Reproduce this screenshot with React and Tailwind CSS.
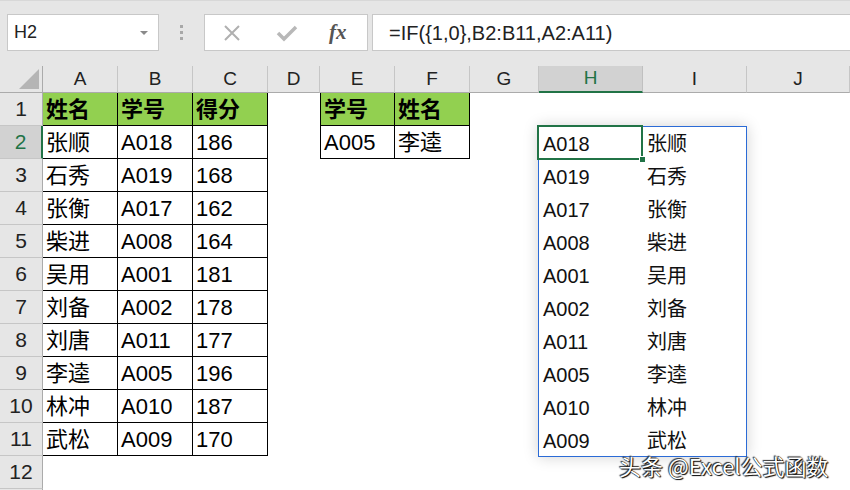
import React from 'react';

const cols = ['A', 'B', 'C', 'D', 'E', 'F', 'G', 'H', 'I', 'J'];

const names = ['张顺', '石秀', '张衡', '柴进', '吴用', '刘备', '刘唐', '李逵', '林冲', '武松'];
const ids = ['A018', 'A019', 'A017', 'A008', 'A001', 'A002', 'A011', 'A005', 'A010', 'A009'];
const scores = ['186', '168', '162', '164', '181', '178', '177', '196', '187', '170'];

function cellContent(col, row) {
  if (row === 1) {
    if (col === 'A') return '姓名';
    if (col === 'B') return '学号';
    if (col === 'C') return '得分';
    if (col === 'E') return '学号';
    if (col === 'F') return '姓名';
    return '';
  }
  const i = row - 2;
  if (row === 2 && col === 'E') return 'A005';
  if (row === 2 && col === 'F') return '李逵';
  if (i >= 0 && i < 10) {
    if (col === 'A') return names[i];
    if (col === 'B') return ids[i];
    if (col === 'C') return scores[i];
    if (col === 'H') return ids[i];
    if (col === 'I') return names[i];
  }
  return '';
}

function cellClass(col, row) {
  const inMain = ['A', 'B', 'C'].includes(col) && row <= 11;
  const inLookup = ['E', 'F'].includes(col) && row <= 2;
  let cls = 'flex items-center overflow-hidden whitespace-nowrap ';
  if (inMain || inLookup) {
    cls += 'border-r border-b border-black pl-[3px] text-[22px] text-black ';
    if (col === 'E') cls += 'border-l ';
    if (row === 1) cls += 'bg-[#92d050] font-bold ';
  } else if (col === 'H') {
    cls += 'pl-[4px] pt-[2px] text-[20px] text-[#111] ';
  } else if (col === 'I') {
    cls += 'pl-[4px] pt-[2px] text-[20px] text-[#111] ';
  }
  return cls;
}

export default function App() {
  const rows = Array.from({ length: 12 }, (_, i) => i + 1);

  return (
    <div className="w-[850px] h-[490px] overflow-hidden bg-white font-['Liberation_Sans','Noto_Sans_CJK_SC',sans-serif] text-[#222]">
      {/* formula bar */}
      <div className="h-[66px] bg-[#e6e6e6] border-t border-[#d8d8d8] flex items-start pt-[13px]">
        <div className="ml-[7px] w-[152px] h-[37px] bg-white border border-[#c8c8c8] flex items-center justify-between pl-[6px] pr-[9px]">
          <span className="text-[18px] text-[#222]">H2</span>
          <svg width="10" height="6" viewBox="0 0 10 6">
            <path d="M1 1 L5 5 L9 1 Z" fill="#8a8a8a" />
          </svg>
        </div>
        <div className="w-[45px] h-[37px] flex flex-col items-center justify-center gap-[3px]">
          <div className="w-[3px] h-[3px] bg-[#a8a8a8]" />
          <div className="w-[3px] h-[3px] bg-[#a8a8a8]" />
          <div className="w-[3px] h-[3px] bg-[#a8a8a8]" />
        </div>
        <div className="w-[164px] h-[37px] bg-white border border-[#c8c8c8] flex items-center pl-[18px]">
          <svg width="18" height="18" viewBox="0 0 18 18">
            <path d="M2 2 L16 16 M16 2 L2 16" stroke="#b0b0b0" strokeWidth="2" />
          </svg>
          <svg width="22" height="18" viewBox="0 0 22 18" className="ml-[35px]">
            <path d="M2 9 L8 15 L20 3" stroke="#b8b8b8" strokeWidth="3.5" fill="none" />
          </svg>
          <span className="ml-[31px] font-['Liberation_Serif',serif] italic text-[21px] text-[#555] font-bold">fx</span>
        </div>
        <div className="ml-[4px] flex-1 h-[37px] bg-white border border-[#c8c8c8] border-r-0 flex items-center pl-[16px]">
          <span className="text-[20px] text-[#222]">=IF({'{'}1,0{'}'},B2:B11,A2:A11)</span>
        </div>
      </div>

      {/* sheet */}
      <div className="relative">
        <div className="grid grid-cols-[43px_75px_75px_75px_52px_75px_75px_69px_104px_104px_1fr] grid-rows-[27px_repeat(12,33px)]">
          {/* corner */}
          <div className="bg-[#e6e6e6] border-r border-b border-[#ababab] flex items-end justify-end pr-[3px] pb-[3px]">
            <svg width="20" height="20" viewBox="0 0 20 20">
              <path d="M20 0 L20 20 L0 20 Z" fill="#b5b5b5" />
            </svg>
          </div>
          {cols.map((c) => (
            <div
              key={c}
              className={
                c === 'H'
                  ? 'bg-[#d2d2d2] border-r border-b-2 border-r-[#c0c0c0] border-b-[#217346] flex items-center justify-center text-[19px] text-[#217346]'
                  : 'bg-[#e6e6e6] border-r border-b border-r-[#c6c6c6] border-b-[#ababab] flex items-center justify-center text-[19px] text-[#222]'
              }
            >
              {c}
            </div>
          ))}

          {rows.map((r) => (
            <React.Fragment key={r}>
              <div
                className={
                  r === 2
                    ? 'bg-[#d2d2d2] border-r-2 border-b border-r-[#217346] border-b-[#c6c6c6] flex items-center justify-center text-[21px] text-[#217346]'
                    : 'bg-[#e6e6e6] border-r border-b border-r-[#ababab] border-b-[#c6c6c6] flex items-center justify-center text-[21px] text-[#222]'
                }
              >
                {r}
              </div>
              {cols.map((c) => (
                <div key={c} className={cellClass(c, r)}>
                  {cellContent(c, r)}
                </div>
              ))}
            </React.Fragment>
          ))}
          <div className="bg-[#e6e6e6] border-r border-[#ababab] h-[30px]" />
        </div>

        {/* H2:I11 range */}
        <div className="absolute left-[538px] top-[60px] w-[209px] h-[331px] border border-[#2b6bd6] shadow-[0_0_14px_rgba(0,0,0,0.18)] pointer-events-none" />
        {/* active cell H2 */}
        <div className="absolute left-[537px] top-[59px] w-[106px] h-[35px] border-2 border-[#217346] pointer-events-none">
          <div className="absolute right-[-5px] bottom-[-5px] w-[7px] h-[7px] bg-[#217346] border border-white" />
        </div>

        {/* watermark */}
        <div className="absolute left-[619px] top-[383px] text-[22px] text-white font-['Noto_Sans_CJK_SC',sans-serif] [text-shadow:0_0_1px_#000,1px_1px_1px_#000,-1px_-1px_1px_#333] whitespace-nowrap">
          头条 @Excel公式函数
        </div>
      </div>
    </div>
  );
}
